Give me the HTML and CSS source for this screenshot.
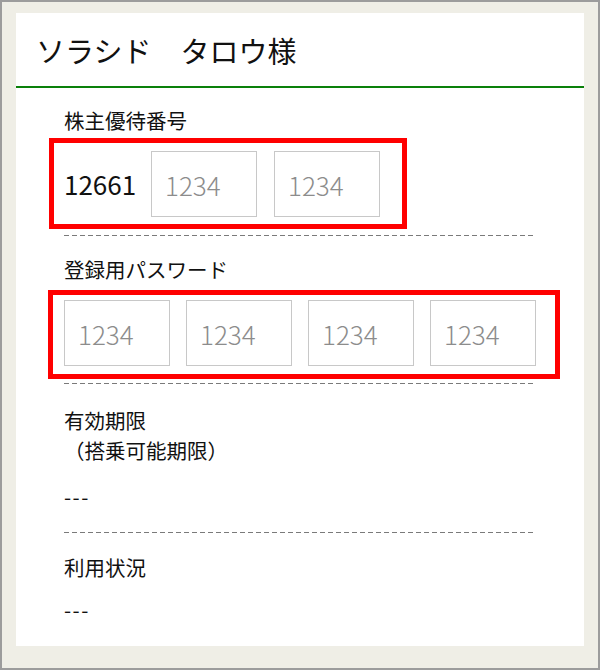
FILE: index.html
```html
<!DOCTYPE html>
<html lang="ja">
<head>
<meta charset="utf-8">
<title>株主優待番号</title>
<link rel="stylesheet" href="styles.css">
</head>
<body>
<div class="frame">
  <div class="card">
    <h1 class="name">ソラシド　タロウ様</h1>
    <div class="body">
      <p class="label">株主優待番号</p>
      <div class="mark mark-number">
        <span class="prefix">12661</span>
        <input class="code" type="text" placeholder="1234">
        <input class="code" type="text" placeholder="1234">
      </div>
      <div class="dash dash-1"></div>

      <p class="label label-2">登録用パスワード</p>
      <div class="mark mark-pass">
        <input class="code" type="text" placeholder="1234">
        <input class="code" type="text" placeholder="1234">
        <input class="code" type="text" placeholder="1234">
        <input class="code" type="text" placeholder="1234">
      </div>
      <div class="dash dash-2"></div>

      <p class="label label-3">有効期限</p>
      <p class="label">（搭乗可能期限）</p>
      <p class="value value-3">---</p>
      <div class="dash dash-3"></div>

      <p class="label label-4">利用状況</p>
      <p class="value value-4">---</p>
    </div>
  </div>
</div>
</body>
</html>
```

FILE: styles.css
```css
html, body {
  margin: 0;
  padding: 0;
}

body {
  font-family: "Noto Sans CJK JP", "Noto Sans", sans-serif;
  color: #111;
  background: #9c9c9c;
}

.frame {
  width: 600px;
  height: 670px;
  box-sizing: border-box;
  border: 2px solid #9c9c9c;
  background: #efeee6;
  padding: 11px 14px 0 14px;
}

.card {
  height: 633px;
  box-sizing: border-box;
  background: #fff;
}

.name {
  margin: 0;
  font-size: 29px;
  font-weight: normal;
  line-height: 40px;
  padding: 17px 0 16px 20px;
  border-bottom: 2px solid #0a800a;
  color: #111;
}

.body {
  padding: 17px 48px 0 48px;
}

.label,
.value {
  margin: 0;
  font-size: 20.5px;
  line-height: 30px;
  color: #111;
}

.value {
  letter-spacing: 1.5px;
}

.label-2 { margin-top: 18px; }
.label-3 { margin-top: 21px; }
.label-4 { margin-top: 19px; }
.value-3 { margin-top: 16px; }
.value-4 { margin-top: 12px; }

.mark {
  border: 5px solid #ff0000;
  box-sizing: border-box;
}

.mark-number {
  display: flex;
  align-items: center;
  width: 358px;
  margin: 3px 0 0 -15px;
  padding: 8px 0 7px 10px;
}

.prefix {
  width: 87px;
  font-size: 26px;
  line-height: 40px;
  color: #111;
}

.mark-number .code + .code {
  margin-left: 17px;
}

.mark-pass {
  display: grid;
  grid-template-columns: repeat(4, 1fr);
  column-gap: 16px;
  margin: 6px -24px 0 -16px;
  padding: 5px 19px 8px 11px;
}

.code {
  display: block;
  width: 106px;
  height: 66px;
  box-sizing: border-box;
  margin: 0;
  border: 1px solid #c8c8c8;
  border-radius: 0;
  padding: 0 0 0 13px;
  background: #fff;
  font-family: "Noto Sans CJK JP", "Noto Sans", sans-serif;
  font-size: 26px;
  font-weight: 300;
  color: #333;
  outline: none;
}

.mark-pass .code {
  width: 100%;
}

.code::placeholder {
  color: #8c8c8c;
  opacity: 1;
}

.dash {
  height: 1px;
  background-image: repeating-linear-gradient(to right, #7a7a7a 0 5px, transparent 5px 8px);
}

.dash-1 { margin-top: 6px; }
.dash-2 { margin-top: 4px; }
.dash-3 { margin-top: 21px; }
```
